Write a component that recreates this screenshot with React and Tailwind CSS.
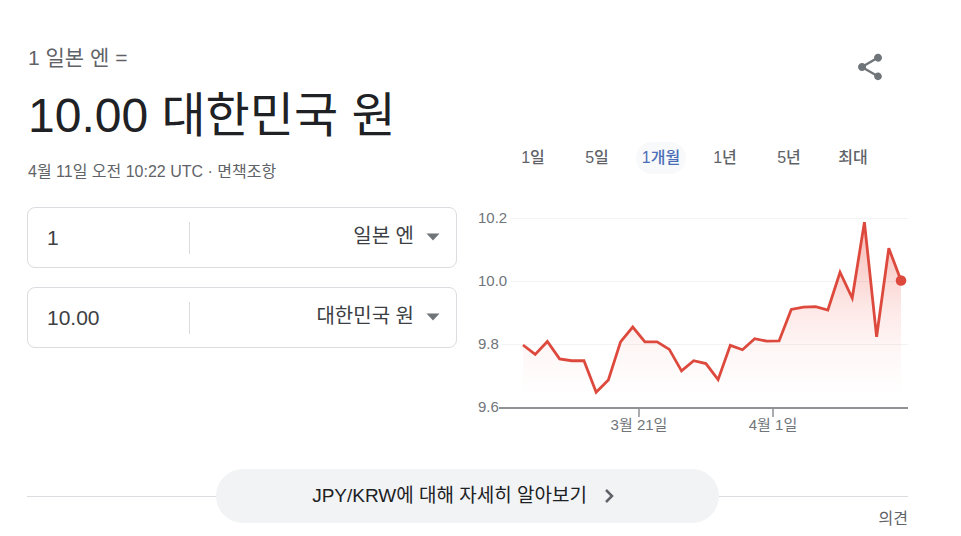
import { useState } from "react";

const RANGES = ["1일", "5일", "1개월", "1년", "5년", "최대"];
const CURRENCIES = ["일본 엔", "대한민국 원"];

const RATES = [
    9.8, 9.77, 9.811, 9.756, 9.75, 9.75, 9.65, 9.689, 9.81, 9.857, 9.81,
    9.81, 9.786, 9.718, 9.75, 9.741, 9.69, 9.799, 9.785, 9.82, 9.812, 9.813,
    9.913, 9.92, 9.922, 9.911, 10.031, 9.949, 10.19, 9.826, 10.107, 10.005,
];

const Y_TICKS = [
    { label: "10.2", y: 19, start: 33 },
    { label: "10.0", y: 82, start: 33 },
    { label: "9.8", y: 145, start: 24 },
];

const X_TICKS = [
    { label: "3월 21일", x: 161 },
    { label: "4월 1일", x: 295 },
];

// Plot area inside the 430x240 chart
const BASE_Y = 208;
const START_X = 45;
const END_X = 423;

function RateChart() {
    const points = RATES.map((rate, i) => [
        START_X + (i * (END_X - START_X)) / (RATES.length - 1),
        BASE_Y - (rate - 9.6) * 315,
    ]);
    const line = points.map((p) => p.join(",")).join(" ");
    const last = points[points.length - 1];

    return (
        <svg viewBox="0 0 430 240" className="mt-[26px] block h-auto w-full" role="img" aria-label="JPY/KRW">
            <defs>
                <linearGradient id="rate-fill" gradientUnits="userSpaceOnUse" x1="0" y1="20" x2="0" y2="196">
                    <stop offset="0" stopColor="#ea4335" stopOpacity="0.38" />
                    <stop offset="0.5" stopColor="#ea4335" stopOpacity="0.12" />
                    <stop offset="0.75" stopColor="#ea4335" stopOpacity="0.04" />
                    <stop offset="1" stopColor="#ea4335" stopOpacity="0" />
                </linearGradient>
            </defs>

            {Y_TICKS.map((t) => (
                <g key={t.label}>
                    <line x1={t.start} x2="430" y1={t.y - 0.5} y2={t.y - 0.5} stroke="#f1f3f4" />
                    <text x="0" y={t.y + 4} className="fill-[#70757a] text-[15px]">{t.label}</text>
                </g>
            ))}
            <text x="0" y="212" className="fill-[#70757a] text-[15px]">9.6</text>

            <polygon points={`${START_X},${BASE_Y} ${line} ${END_X},${BASE_Y}`} fill="url(#rate-fill)" />
            <line x1="21" x2="430" y1={BASE_Y} y2={BASE_Y} stroke="#8f9194" strokeWidth="2" />

            {X_TICKS.map((t) => (
                <g key={t.label}>
                    <line x1={t.x} x2={t.x} y1="208" y2="217" stroke="#8f9194" strokeWidth="1.5" />
                    <text x={t.x} y="230" textAnchor="middle" className="fill-[#70757a] text-[15px]">{t.label}</text>
                </g>
            ))}

            <polyline points={line} fill="none" stroke="#dd4a3d" strokeWidth="2.8" />
            <circle cx={last[0]} cy={last[1]} r="5.3" fill="#dd4a3d" />
        </svg>
    );
}

function CurrencyRow({ amount, onAmount, currency, onCurrency, label }) {
    return (
        <div className="flex h-[61px] items-center rounded-lg border border-[#dadce0]">
            <input
                type="text"
                aria-label={`${label} 금액`}
                value={amount}
                onChange={(e) => onAmount(e.target.value)}
                className="h-full w-[37.5%] pl-[19px] text-[21px] text-[#3c4043] outline-none"
            />
            <div className="h-8 w-px bg-[#dadce0]"></div>
            <div className="relative h-full flex-1">
                <select
                    aria-label={`${label} 통화`}
                    value={currency}
                    onChange={(e) => onCurrency(e.target.value)}
                    className="h-full w-full appearance-none pr-[42px] pb-[3px] text-right text-[20px] text-[#3c4043] outline-none [text-align-last:right]"
                >
                    {CURRENCIES.map((c) => (
                        <option key={c}>{c}</option>
                    ))}
                </select>
                <svg viewBox="0 0 14 8" className="pointer-events-none absolute top-[25px] right-4 h-2 w-[14px]" aria-hidden="true">
                    <path d="M0.5 0.5h13L7 7.5z" fill="#70757a" />
                </svg>
            </div>
        </div>
    );
}

export default function App() {
    const [range, setRange] = useState("1개월");
    const [fromAmount, setFromAmount] = useState("1");
    const [toAmount, setToAmount] = useState("10.00");
    const [fromCurrency, setFromCurrency] = useState(CURRENCIES[0]);
    const [toCurrency, setToCurrency] = useState(CURRENCIES[1]);

    return (
        <main lang="ko" className="bg-white pt-[43px] pr-[53px] pl-[27px] font-['Liberation_Sans','Noto_Sans_CJK_KR',sans-serif] text-[#202124]">
            <div className="grid grid-cols-2 gap-[21px]">
                {/* Converter */}
                <section>
                    <div className="pl-px">
                        <div className="text-[21px] leading-[30px] text-[#5f6368]">1 일본 엔 =</div>
                        <h1 className="mt-[11px] text-5xl leading-[64px] whitespace-nowrap">10.00 대한민국 원</h1>
                        <div className="mt-3 text-base leading-6 text-[#5f6368]">
                            4월 11일 오전 10:22 UTC · <a href="#disclaimer">면책조항</a>
                        </div>
                    </div>
                    <div className="mt-[23px] flex flex-col gap-[19px]">
                        <CurrencyRow
                            label="보내는"
                            amount={fromAmount}
                            onAmount={setFromAmount}
                            currency={fromCurrency}
                            onCurrency={setFromCurrency}
                        />
                        <CurrencyRow
                            label="받는"
                            amount={toAmount}
                            onAmount={setToAmount}
                            currency={toCurrency}
                            onCurrency={setToCurrency}
                        />
                    </div>
                </section>

                {/* Chart */}
                <section>
                    <div className="flex justify-end pr-[14px]">
                        <button type="button" aria-label="공유" className="flex size-12 items-center justify-center">
                            <svg viewBox="0 0 24 24" className="size-8 fill-[#70757a]">
                                <path d="M18 16.08c-.76 0-1.44.3-1.96.77L8.91 12.7c.05-.23.09-.46.09-.7s-.04-.47-.09-.7l7.05-4.11c.54.5 1.25.81 2.04.81 1.66 0 3-1.34 3-3s-1.34-3-3-3-3 1.34-3 3c0 .24.04.47.09.7L8.04 9.81C7.5 9.31 6.79 9 6 9c-1.66 0-3 1.34-3 3s1.34 3 3 3c.79 0 1.5-.31 2.04-.81l7.12 4.16c-.05.21-.08.43-.08.65 0 1.61 1.31 2.92 2.92 2.92s2.92-1.31 2.92-2.92-1.31-2.92-2.92-2.92z" />
                            </svg>
                        </button>
                    </div>
                    <div className="mt-[51px] mr-[23px] ml-[23px] grid grid-cols-6">
                        {RANGES.map((r) => (
                            <button
                                key={r}
                                type="button"
                                aria-pressed={r === range}
                                onClick={() => setRange(r)}
                                className={`h-8 justify-self-center rounded-full px-[6px] text-base font-medium whitespace-nowrap ${r === range ? "bg-[#f8f9fa] text-[#4a6fb8]" : "text-[#5f6368]"}`}
                            >
                                {r}
                            </button>
                        ))}
                    </div>
                    <RateChart />
                </section>
            </div>

            <footer className="mt-[29px] flex flex-col">
                <div className="flex items-center">
                    <div className="h-px flex-1 bg-[#dadce0]"></div>
                    <a href="#more" className="flex h-[54px] w-[57%] items-center justify-center gap-4 rounded-full bg-[#f1f3f4] text-[19px]">
                        JPY/KRW에 대해 자세히 알아보기
                        <svg viewBox="0 0 20 20" className="size-5 fill-none stroke-[#5f6368]" strokeWidth="2.5" aria-hidden="true">
                            <path d="M3 4l6 6-6 6" />
                        </svg>
                    </a>
                    <div className="h-px flex-1 bg-[#dadce0]"></div>
                </div>
                <a href="#feedback" className="-mt-4 self-end text-base leading-6 text-[#5f6368]">의견</a>
            </footer>
        </main>
    );
}
